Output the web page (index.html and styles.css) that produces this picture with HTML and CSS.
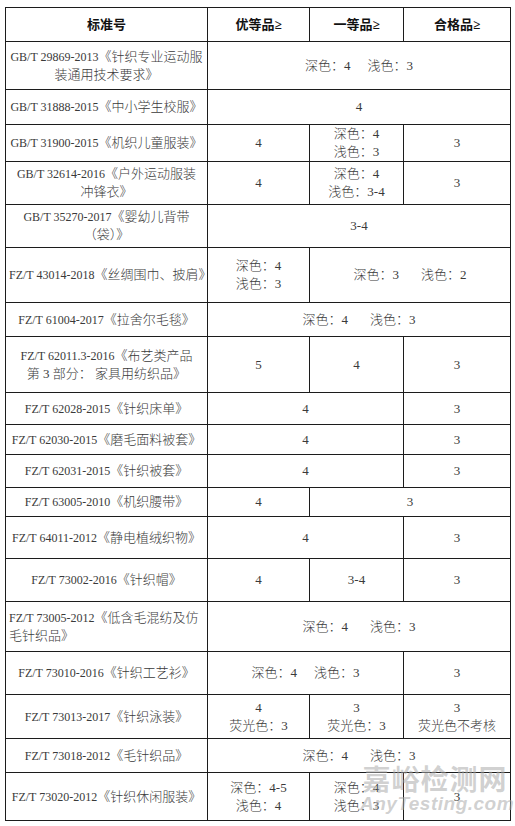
FILE: index.html
```html
<!DOCTYPE html>
<html lang="zh-CN">
<head>
<meta charset="utf-8">
<title>色牢度标准</title>
<link rel="stylesheet" href="styles.css">
</head>
<body>
<div class="page">
<table class="spec">
  <colgroup>
    <col class="c1"><col class="c2"><col class="c3"><col class="c4">
  </colgroup>
  <thead>
    <tr class="h34 head">
      <th>标准号</th><th>优等品≥</th><th>一等品≥</th><th>合格品≥</th>
    </tr>
  </thead>
  <tbody>
    <tr class="h48">
      <td><span class="code">GB/T 29869-2013</span>《针织专业运动服<br>装通用技术要求》</td>
      <td colspan="3">深色：4<span class="gap"></span>浅色：3</td>
    </tr>
    <tr class="h35">
      <td><span class="code">GB/T 31888-2015</span>《中小学生校服》</td>
      <td colspan="3">4</td>
    </tr>
    <tr class="h36">
      <td><span class="code">GB/T 31900-2015</span>《机织儿童服装》</td>
      <td>4</td>
      <td>深色：4<br>浅色：3</td>
      <td>3</td>
    </tr>
    <tr class="h43">
      <td><span class="code">GB/T 32614-2016</span>《户外运动服装<br>冲锋衣》</td>
      <td>4</td>
      <td>深色：4<br>浅色：3-4</td>
      <td>3</td>
    </tr>
    <tr class="h43">
      <td><span class="code">GB/T 35270-2017</span>《婴幼儿背带<br>（袋）》</td>
      <td colspan="3">3-4</td>
    </tr>
    <tr class="h55">
      <td><span class="code">FZ/T 43014-2018</span>《丝绸围巾、披肩》</td>
      <td>深色：4<br>浅色：3</td>
      <td colspan="2">深色：3<span class="gap wide"></span>浅色：2</td>
    </tr>
    <tr class="h34">
      <td><span class="code">FZ/T 61004-2017</span>《拉舍尔毛毯》</td>
      <td colspan="3">深色：4<span class="gap wide"></span>浅色：3</td>
    </tr>
    <tr class="h56">
      <td><span class="code">FZ/T 62011.3-2016</span>《布艺类产品<br>第 3 部分： 家具用纺织品》</td>
      <td>5</td>
      <td>4</td>
      <td>3</td>
    </tr>
    <tr class="h32">
      <td><span class="code">FZ/T 62028-2015</span>《针织床单》</td>
      <td colspan="2">4</td>
      <td>3</td>
    </tr>
    <tr class="h30">
      <td><span class="code">FZ/T 62030-2015</span>《磨毛面料被套》</td>
      <td colspan="2">4</td>
      <td>3</td>
    </tr>
    <tr class="h33">
      <td><span class="code">FZ/T 62031-2015</span>《针织被套》</td>
      <td colspan="2">4</td>
      <td>3</td>
    </tr>
    <tr class="h29">
      <td><span class="code">FZ/T 63005-2010</span>《机织腰带》</td>
      <td>4</td>
      <td colspan="2">3</td>
    </tr>
    <tr class="h42">
      <td><span class="code">FZ/T 64011-2012</span>《静电植绒织物》</td>
      <td colspan="2">4</td>
      <td>3</td>
    </tr>
    <tr class="h43">
      <td><span class="code">FZ/T 73002-2016</span>《针织帽》</td>
      <td>4</td>
      <td>3-4</td>
      <td>3</td>
    </tr>
    <tr class="h50">
      <td class="left"><span class="code">FZ/T 73005-2012</span>《低含毛混纺及仿<br>毛针织品》</td>
      <td colspan="3">深色：4<span class="gap wide"></span>浅色：3</td>
    </tr>
    <tr class="h43">
      <td><span class="code">FZ/T 73010-2016</span>《针织工艺衫》</td>
      <td colspan="2">深色：4<span class="gap"></span>浅色：3</td>
      <td>3</td>
    </tr>
    <tr class="h44">
      <td><span class="code">FZ/T 73013-2017</span>《针织泳装》</td>
      <td>4<br>荧光色：3</td>
      <td>3<br>荧光色：3</td>
      <td>3<br>荧光色不考核</td>
    </tr>
    <tr class="h34">
      <td><span class="code">FZ/T 73018-2012</span>《毛针织品》</td>
      <td colspan="3">深色：4<span class="gap wide"></span>浅色：3</td>
    </tr>
    <tr class="h48">
      <td><span class="code">FZ/T 73020-2012</span>《针织休闲服装》</td>
      <td>深色：4-5<br>浅色：4</td>
      <td>深色：4<br>浅色：3</td>
      <td>3</td>
    </tr>
  </tbody>
</table>
<div class="watermark">
  <div class="wm-cn">嘉峪检测网</div>
  <div class="wm-en">AnyTesting.com</div>
</div>
</div>
</body>
</html>
```

FILE: styles.css
```css
html, body {
  margin: 0;
  padding: 0;
  background: #ffffff;
}

.page {
  position: relative;
  width: 515px;
  height: 826px;
  padding: 7px 0 0 5px;
  box-sizing: border-box;
}

.spec {
  border-collapse: collapse;
  table-layout: fixed;
  width: 505px;
  font-family: "Liberation Serif", "Noto Sans CJK SC", serif;
  font-size: 13px;
  line-height: 18px;
  color: #3a3a3a;
}

.c1 { width: 202px; }
.c2 { width: 102px; }
.c3 { width: 94px; }
.c4 { width: 107px; }

.spec th,
.spec td {
  border: 1px solid #1c1c1c;
  padding: 0 3px;
  text-align: center;
  vertical-align: middle;
  white-space: nowrap;
  font-weight: 300;
}

.spec th {
  font-weight: 700;
  color: #111111;
}

.spec td.left {
  text-align: left;
}

.code {
  font-size: 12px;
}

.gap {
  display: inline-block;
  width: 17px;
}

.gap.wide {
  width: 22px;
}

.h29 { height: 29px; }
.h30 { height: 30px; }
.h32 { height: 32px; }
.h33 { height: 33px; }
.h34 { height: 34px; }
.h35 { height: 35px; }
.h36 { height: 36px; }
.h42 { height: 42px; }
.h43 { height: 43px; }
.h44 { height: 44px; }
.h48 { height: 48px; }
.h50 { height: 50px; }
.h55 { height: 55px; }
.h56 { height: 56px; }

.watermark {
  position: absolute;
  left: 360px;
  top: 762px;
  width: 150px;
  text-align: center;
  pointer-events: none;
}

.wm-cn {
  font-family: "Noto Sans CJK SC", sans-serif;
  font-weight: 700;
  font-size: 28px;
  line-height: 32px;
  letter-spacing: 1px;
  color: rgba(170, 170, 170, 0.55);
}

.wm-en {
  font-family: "Liberation Sans", sans-serif;
  font-style: italic;
  font-weight: 700;
  font-size: 19px;
  line-height: 20px;
  letter-spacing: 0.5px;
  color: rgba(170, 170, 170, 0.55);
}
```
